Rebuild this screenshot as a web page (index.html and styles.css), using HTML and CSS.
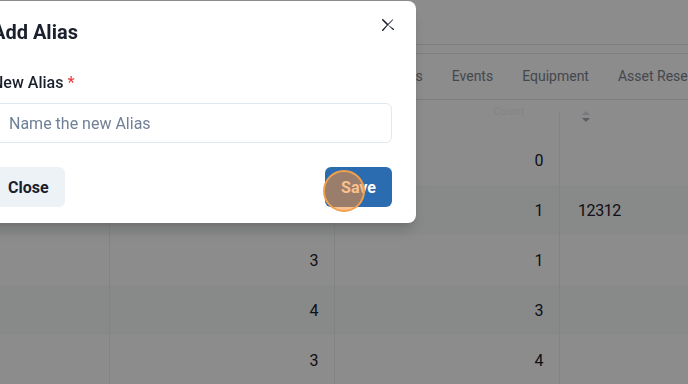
FILE: index.html
```html
<!DOCTYPE html>
<html lang="en">
<head>
    <meta charset="UTF-8">
    <meta name="viewport" content="width=device-width, initial-scale=1.0">
    <title>Add Alias</title>
    <link rel="stylesheet" href="styles.css">
</head>
<body>
    <div class="page">
        <header class="topbar"></header>

        <nav class="tabs">
            <span class="tab">Readings</span>
            <span class="tab">Aliases</span>
            <span class="tab">Events</span>
            <span class="tab">Equipment</span>
            <span class="tab">Asset Reservations</span>
        </nav>

        <div class="table">
            <div class="row head">
                <div class="cell"></div>
                <div class="cell"></div>
                <div class="cell"><span class="faint">Count</span></div>
                <div class="cell">
                    <svg class="sort" viewBox="0 0 10 14" width="10" height="14">
                        <path d="M1 5 L5 1 L9 5 Z" fill="#dcdfe3"/>
                        <path d="M1 8 L9 8 L5 12 Z" fill="#a3a9b1"/>
                    </svg>
                </div>
            </div>
            <div class="row">
                <div class="cell"></div>
                <div class="cell num">2</div>
                <div class="cell num">0</div>
                <div class="cell"></div>
            </div>
            <div class="row">
                <div class="cell"></div>
                <div class="cell num">5</div>
                <div class="cell num">1</div>
                <div class="cell">12312</div>
            </div>
            <div class="row">
                <div class="cell"></div>
                <div class="cell num">3</div>
                <div class="cell num">1</div>
                <div class="cell"></div>
            </div>
            <div class="row">
                <div class="cell"></div>
                <div class="cell num">4</div>
                <div class="cell num">3</div>
                <div class="cell"></div>
            </div>
            <div class="row">
                <div class="cell"></div>
                <div class="cell num">3</div>
                <div class="cell num">4</div>
                <div class="cell"></div>
            </div>
        </div>
    </div>

    <div class="overlay"></div>

    <div class="modal-layer">
        <section class="modal">
            <header class="modal-header">
                <h2>Add Alias</h2>
                <button class="close-x" aria-label="Close">
                    <svg viewBox="0 0 24 24" width="12" height="12">
                        <path fill="currentColor" d="M.439,21.44a1.5,1.5,0,0,0,2.122,2.121L11.823,12.3a.25.25,0,0,1,.354,0l9.262,9.263a1.5,1.5,0,1,0,2.122-2.121L12.3,12.177a.25.25,0,0,1,0-.354l9.263-9.262A1.5,1.5,0,0,0,21.439.44L12.177,9.7a.25.25,0,0,1-.354,0L2.561.44A1.5,1.5,0,0,0,.439,2.561L9.7,11.823a.25.25,0,0,1,0,.354Z"/>
                    </svg>
                </button>
            </header>

            <div class="modal-body">
                <label for="alias">New Alias <span class="req">*</span></label>
                <input type="text" id="alias" placeholder="Name the new Alias">
            </div>

            <footer class="modal-footer">
                <button class="btn btn-close">Close</button>
                <button class="btn btn-save">Save<span class="cursor"></span></button>
            </footer>
        </section>
    </div>
</body>
</html>
```

FILE: styles.css
```css
:root {
    --text: #1a202c;
    --muted: #718096;
    --border: #e2e8f0;
    --blue: #2b6cb0;
    --gray-btn: #edf2f7;
}

* {
    margin: 0;
    padding: 0;
    box-sizing: border-box;
}

body {
    font-family: Roboto, "Liberation Sans", sans-serif;
    color: var(--text);
    background: #ffffff;
    width: 688px;
    height: 384px;
    overflow: hidden;
}

/* page behind the dialog */

.topbar {
    height: 45px;
    border-bottom: 1px solid var(--border);
}

.tabs {
    display: flex;
    margin-top: 8px;
    height: 47px;
    border-top: 1px solid var(--border);
    border-bottom: 1px solid var(--border);
    padding-left: 276px;
    white-space: nowrap;
    overflow: hidden;
}

.tab {
    padding: 0 14.5px;
    font-size: 14px;
    line-height: 45px;
    color: #7c838e;
}

.row {
    display: grid;
    grid-template-columns: 109px 225px 225px 1fr;
    height: 50px;
}

.row:nth-child(odd) {
    background: #f8f9fa;
}

.row.head {
    height: 35px;
    background: #ffffff;
}

.cell {
    border-left: 1px solid #eceef1;
    padding: 0 16px 0 18px;
    display: flex;
    align-items: center;
    font-size: 16px;
    letter-spacing: -0.4px;
}

.cell:first-child {
    border-left: none;
}

.cell.num {
    justify-content: flex-end;
}

.head .cell {
    margin-top: 12px;
    align-items: flex-start;
}

.faint {
    margin-left: auto;
    margin-right: 18px;
    margin-top: -6px;
    font-size: 10px;
    color: #eef0f2;
    letter-spacing: 1px;
}

.sort {
    margin-left: 3px;
    margin-top: -2px;
}

/* dialog */

.overlay {
    position: fixed;
    inset: 0;
    background: rgba(0, 0, 0, 0.45);
}

.modal-layer {
    position: fixed;
    inset: 0;
}

.modal {
    position: relative;
    width: 448px;
    margin: 1px 0 0 -32px;
    background: #ffffff;
    border-radius: 8px;
    box-shadow: 0 10px 15px -3px rgba(0, 0, 0, 0.15), 0 4px 6px -2px rgba(0, 0, 0, 0.08);
}

.modal-header {
    padding: 16px 24px;
}

.modal-header h2 {
    font-size: 20px;
    font-weight: 700;
    line-height: 30px;
}

.close-x {
    position: absolute;
    top: 8px;
    right: 12px;
    width: 32px;
    height: 32px;
    border: none;
    background: none;
    color: var(--text);
    display: flex;
    align-items: center;
    justify-content: center;
}

.modal-body {
    padding: 8px 24px;
}

.modal-body label {
    display: block;
    font-size: 16px;
    font-weight: 500;
    line-height: 24px;
    margin-bottom: 8px;
}

.req {
    color: #e53e3e;
}

.modal-body input {
    width: 100%;
    height: 40px;
    padding: 0 16px;
    border: 1px solid var(--border);
    border-radius: 6px;
    font-family: inherit;
    font-size: 16px;
    color: var(--text);
}

.modal-body input::placeholder {
    color: var(--muted);
}

.modal-footer {
    display: flex;
    justify-content: space-between;
    padding: 16px 24px;
}

.btn {
    position: relative;
    height: 40px;
    padding: 0 16px;
    border: none;
    border-radius: 6px;
    font-family: inherit;
    font-size: 16px;
    font-weight: 700;
}

.btn-close {
    background: var(--gray-btn);
    color: var(--text);
}

.btn-save {
    background: var(--blue);
    color: #ffffff;
}

/* click marker from the recording */
.cursor {
    position: absolute;
    left: -2px;
    top: 3px;
    width: 42px;
    height: 42px;
    border-radius: 50%;
    border: 2px solid #f0a04b;
    background: rgba(245, 140, 50, 0.55);
}
```
